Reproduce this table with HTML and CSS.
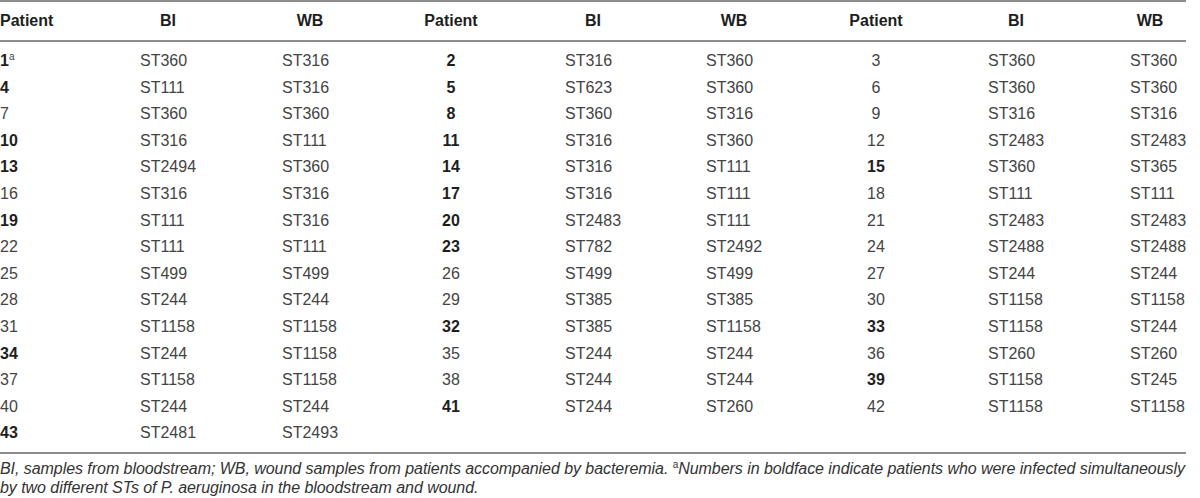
FILE: index.html
```html
<!DOCTYPE html>
<html>
<head>
<meta charset="utf-8">
<link rel="stylesheet" href="styles.css">
</head>
<body>
<div class="tbl">
  <div class="thead">
    <div class="c-left"><b>Patient</b></div>
    <div><span class="h">BI</span></div>
    <div><span class="h">WB</span></div>
    <div class="c-center"><b>Patient</b></div>
    <div><span class="h">BI</span></div>
    <div><span class="h">WB</span></div>
    <div class="c-center"><b>Patient</b></div>
    <div><span class="h">BI</span></div>
    <div><span class="h h-last">WB</span></div>
  </div>
  <div class="tbody">
    <div class="b">1<sup>a</sup></div><div>ST360</div><div>ST316</div><div class="c-center b">2</div><div>ST316</div><div>ST360</div><div class="c-center">3</div><div>ST360</div><div>ST360</div>
    <div class="b">4</div><div>ST111</div><div>ST316</div><div class="c-center b">5</div><div>ST623</div><div>ST360</div><div class="c-center">6</div><div>ST360</div><div>ST360</div>
    <div>7</div><div>ST360</div><div>ST360</div><div class="c-center b">8</div><div>ST360</div><div>ST316</div><div class="c-center">9</div><div>ST316</div><div>ST316</div>
    <div class="b">10</div><div>ST316</div><div>ST111</div><div class="c-center b">11</div><div>ST316</div><div>ST360</div><div class="c-center">12</div><div>ST2483</div><div>ST2483</div>
    <div class="b">13</div><div>ST2494</div><div>ST360</div><div class="c-center b">14</div><div>ST316</div><div>ST111</div><div class="c-center b">15</div><div>ST360</div><div>ST365</div>
    <div>16</div><div>ST316</div><div>ST316</div><div class="c-center b">17</div><div>ST316</div><div>ST111</div><div class="c-center">18</div><div>ST111</div><div>ST111</div>
    <div class="b">19</div><div>ST111</div><div>ST316</div><div class="c-center b">20</div><div>ST2483</div><div>ST111</div><div class="c-center">21</div><div>ST2483</div><div>ST2483</div>
    <div>22</div><div>ST111</div><div>ST111</div><div class="c-center b">23</div><div>ST782</div><div>ST2492</div><div class="c-center">24</div><div>ST2488</div><div>ST2488</div>
    <div>25</div><div>ST499</div><div>ST499</div><div class="c-center">26</div><div>ST499</div><div>ST499</div><div class="c-center">27</div><div>ST244</div><div>ST244</div>
    <div>28</div><div>ST244</div><div>ST244</div><div class="c-center">29</div><div>ST385</div><div>ST385</div><div class="c-center">30</div><div>ST1158</div><div>ST1158</div>
    <div>31</div><div>ST1158</div><div>ST1158</div><div class="c-center b">32</div><div>ST385</div><div>ST1158</div><div class="c-center b">33</div><div>ST1158</div><div>ST244</div>
    <div class="b">34</div><div>ST244</div><div>ST1158</div><div class="c-center">35</div><div>ST244</div><div>ST244</div><div class="c-center">36</div><div>ST260</div><div>ST260</div>
    <div>37</div><div>ST1158</div><div>ST1158</div><div class="c-center">38</div><div>ST244</div><div>ST244</div><div class="c-center b">39</div><div>ST1158</div><div>ST245</div>
    <div>40</div><div>ST244</div><div>ST244</div><div class="c-center b">41</div><div>ST244</div><div>ST260</div><div class="c-center">42</div><div>ST1158</div><div>ST1158</div>
    <div class="b">43</div><div>ST2481</div><div>ST2493</div><div></div><div></div><div></div><div></div><div></div><div></div>
  </div>
</div>
<p class="foot">BI, samples from bloodstream; WB, wound samples from patients accompanied by bacteremia. <sup>a</sup>Numbers in boldface indicate patients who were infected simultaneously<br>by two different STs of P. aeruginosa in the bloodstream and wound.</p>
</body>
</html>
```
FILE: styles.css
```css
html, body {
  margin: 0;
  padding: 0;
  background: #fff;
}
body {
  font-family: "Liberation Sans", Arial, sans-serif;
  font-size: 16px;
  color: #444;
  width: 1200px;
}
.tbl {
  width: 1186px;
}
.thead, .tbody {
  display: grid;
  grid-template-columns: 140px 142px 55px 228px 141px 58px 224px 142px 56px;
}
.thead {
  border-top: 2px solid #8c8c8c;
  border-bottom: 2px solid #8c8c8c;
  height: 38px;
  align-items: center;
  color: #1e1e1e;
  font-weight: bold;
}
.thead .h {
  display: inline-block;
  width: 56px;
  text-align: center;
}
.thead .h-last {
  width: 40px;
}
.tbody {
  grid-auto-rows: 26.6px;
  align-items: center;
  padding-top: 5.7px;
  padding-bottom: 5.3px;
  border-bottom: 2px solid #8c8c8c;
  line-height: 18px;
}
.c-center {
  text-align: center;
}
.b {
  font-weight: bold;
  color: #1e1e1e;
}
sup {
  font-size: 10px;
  font-weight: normal;
  line-height: 0;
  vertical-align: 6px;
  color: #444;
}
.foot {
  margin: 5.5px 0 0 0;
  font-style: italic;
  font-size: 16px;
  line-height: 19px;
  letter-spacing: -0.055px;
  color: #333;
  width: 1200px;
  white-space: nowrap;
}
.foot sup {
  color: #333;
  font-style: normal;
}
```
